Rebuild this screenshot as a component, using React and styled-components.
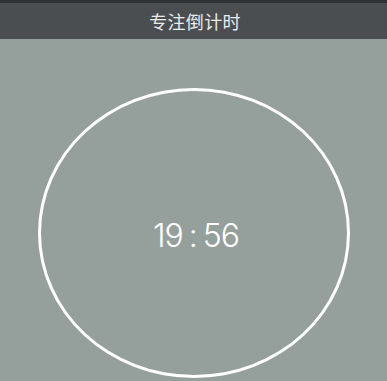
import React from "react";
import styled, { createGlobalStyle } from "styled-components";

const Global = createGlobalStyle`
  html, body { margin: 0; padding: 0; background: #95a09c; }
  #root { width: 387px; height: 381px; }
`;

const Page = styled.div`
  width: 387px;
  height: 381px;
  display: flex;
  flex-direction: column;
  background: #95a09c;
  overflow: hidden;
`;

const StatusStrip = styled.div`
  height: 3px;
  background: #2f3234;
`;

const Header = styled.div`
  height: 36px;
  background: #4a4e51;
  display: flex;
  align-items: center;
  justify-content: center;
  color: #ececec;
  font-family: "Noto Sans CJK SC", "Noto Sans", sans-serif;
  font-size: 18px;
  letter-spacing: 0.3px;
  padding-left: 3px;
  padding-bottom: 1px;
  box-sizing: border-box;
`;

const Body = styled.div`
  flex: 1;
  display: flex;
  justify-content: center;
  padding-top: 49px;
`;

const Ring = styled.div`
  width: 312px;
  height: 290px;
  box-sizing: border-box;
  border: 3px solid #ffffff;
  border-radius: 50%;
  display: flex;
  align-items: center;
  justify-content: center;
  flex-shrink: 0;
`;

const Time = styled.div`
  color: #ffffff;
  font-family: Inter, Roboto, sans-serif;
  font-weight: 300;
  font-size: 32px;
  font-variant-numeric: proportional-nums;
  letter-spacing: -1px;
  word-spacing: -2px;
  white-space: pre;
  margin-left: 5px;
  margin-top: 5px;
`;

export default function App() {
  return (
    <>
      <Global />
      <Page>
        <StatusStrip />
        <Header>专注倒计时</Header>
        <Body>
          <Ring>
            <Time>19 : 56</Time>
          </Ring>
        </Body>
      </Page>
    </>
  );
}
